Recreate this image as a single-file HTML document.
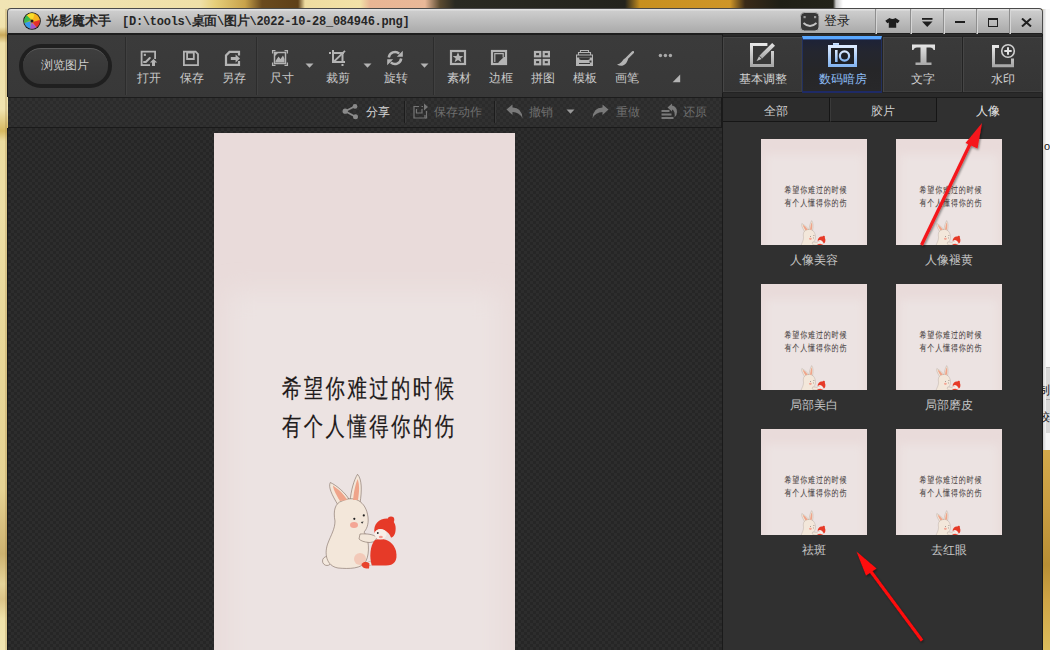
<!DOCTYPE html>
<html><head><meta charset="utf-8">
<style>
*{margin:0;padding:0;box-sizing:border-box}
html,body{width:1050px;height:650px;overflow:hidden;background:#eddfb2;font-family:"Liberation Sans",sans-serif}
div,span,svg{position:absolute}
.t{white-space:nowrap;line-height:1}
#title{left:7px;top:8px;width:1036px;height:27px;background:linear-gradient(#e2e2e2 0,#e2e2e2 1px,#cdcdcd 2px,#b9b9b9 60%,#a9a9a9 100%);border:1px solid #4a4a4a;border-bottom:2px solid #1e1e1e;border-radius:4px 4px 0 0}
#toolbar{left:7px;top:35px;width:716px;height:62px;background:linear-gradient(#3b3b3b,#383838);border-left:1px solid #1a1a1a}
#bar2{left:8px;top:97px;width:714px;height:31px;background:repeating-conic-gradient(#313131 0 25%,#2b2b2b 0 50%) 0 0/6px 6px;border-top:1px solid #1c1c1c;border-bottom:1px solid #1a1a1a;border-right:1px solid #1a1a1a}
#canvas{left:7px;top:128px;width:715px;height:522px;background:repeating-conic-gradient(#2d2d2d 0 25%,#262626 0 50%) 0 0/6px 6px;border-left:1px solid #1a1a1a}
#rpanel{left:722px;top:34px;width:321px;height:616px;background:#2b2b2b;border-left:1px solid #1a1a1a;border-right:1px solid #1a1a1a}
.lbl{color:#c9c9c9;font-size:12px}
.sep{width:1px;background:#2c2c2c;box-shadow:1px 0 0 #404040}
</style></head>
<body>
<!-- desktop strips -->
<div style="left:0;top:0;width:1050px;height:9px;background:linear-gradient(90deg,#f1e4b4 0,#efe0a8 200px,#e6cf7a 215px,#c8a24a 245px,#6a4a1e 262px,#5e3f18 298px,#efdca0 305px,#f2e2a8 360px,#e8b594 370px,#e9b898 425px,#5a4a30 440px,#2a2a22 455px,#23231d 625px,#c8901f 640px,#cf9628 730px,#3a2a18 745px,#1f1f16 780px,#23231a 833px,#c8c8c8 836px,#ffffff 843px)"></div>
<div style="left:0;top:9px;width:8px;height:641px;background:linear-gradient(180deg,#f2e6b4 0,#f0e2ac 18px,#c9a95a 26px,#efe0a8 34px,#f1e4b0 100px,#d6b860 122px,#ecdca0 132px,#eedfa6 200px,#e9d89a 320px,#e6d394 480px,#d8c080 515px,#cdb270 545px,#e6d49a 575px,#dcc488 590px,#f0e2aa 610px,#f2e6b2 641px)"></div>
<div style="left:5px;top:9px;width:2px;height:641px;background:rgba(150,120,60,0.25)"></div>
<div style="left:1043px;top:9px;width:7px;height:444px;background:#fafafa"></div>
<div style="left:1043px;top:367px;width:7px;height:66px;background:#d8d8d8;border-top:1px solid #bbb"></div>
<div style="left:1043px;top:399px;width:7px;height:1px;background:#aaa"></div>
<div style="left:1043px;top:419px;width:7px;height:1px;background:#aaa"></div>
<div style="left:1043px;top:433px;width:7px;height:20px;background:#f6f6f6"></div>
<div style="left:1043px;top:9px;width:7px;height:444px;overflow:hidden">
<div style="left:0;top:0;width:3px;height:444px;background:linear-gradient(90deg,#d0d0d0,#f4f4f4)"></div>
<div class="t" style="left:1px;top:132px;font-size:11px;color:#111">o</div>
<div class="t" style="left:-5px;top:375px;font-size:12px;color:#111">制</div>
<div class="t" style="left:-5px;top:402px;font-size:12px;color:#111">较</div>
</div>
<div style="left:1043px;top:450px;width:7px;height:200px;background:linear-gradient(180deg,#d2a84a 0,#c99c40 60px,#b88e34 115px,#cfa445 150px,#dcbc5c 200px)"></div>

<div id="title"></div>
<div id="toolbar"></div>
<div id="bar2"></div>
<div id="canvas"></div>
<div id="rpanel"></div>



<!-- bar2 content -->
<svg style="left:342px;top:104px" width="16" height="16" viewBox="0 0 16 16">
<path d="M3.2 7.2 L13 2.2 M3.2 7.2 L13.5 12.7" stroke="#8a8a8a" stroke-width="1.8"/>
<circle cx="3.2" cy="7.2" r="2.6" fill="#8a8a8a"/><circle cx="13" cy="2.4" r="2.4" fill="#8a8a8a"/><circle cx="13.5" cy="12.7" r="2.5" fill="#8a8a8a"/>
</svg>
<div class="t" style="left:365.5px;top:106px;font-size:12px;color:#d6d6d6">分享</div>
<div style="left:404px;top:101px;width:1px;height:22px;background:#1c1c1c;box-shadow:1px 0 0 #3a3a3a"></div>
<svg style="left:413px;top:103px" width="16" height="16" viewBox="0 0 16 16">
<path d="M6 3.5 H1 V15 H12 V12" stroke="#767676" stroke-width="1.2" fill="none"/>
<path d="M3.5 6 V10 H9 V6" stroke="#767676" stroke-width="1.2" fill="none"/>
<path d="M8.5 3.5 H10" stroke="#767676" stroke-width="1.2"/>
<path d="M11 0.5 L15 4 L11 7.5Z" fill="#767676"/>
<path d="M13.5 8 V15 H12" stroke="#767676" stroke-width="1.2" fill="none"/>
</svg>
<div class="t" style="left:433.5px;top:106px;font-size:12px;color:#6e6e6e">保存动作</div>
<div style="left:494px;top:101px;width:1px;height:22px;background:#1c1c1c;box-shadow:1px 0 0 #3a3a3a"></div>
<svg style="left:506px;top:104px" width="17" height="15" viewBox="0 0 17 15">
<path d="M0.5 5.5 L6.5 0.5 V3.5 Q16 3.5 16.5 14.5 Q13.5 8 6.5 8 V11Z" fill="#7a7a7a"/>
</svg>
<div class="t" style="left:528.5px;top:106px;font-size:12px;color:#6e6e6e">撤销</div>
<svg style="left:566px;top:109px" width="9" height="5" viewBox="0 0 9 5"><path d="M0.5 0.5 H8.5 L4.5 4.8Z" fill="#9a9a9a"/></svg>
<svg style="left:592px;top:104px" width="17" height="15" viewBox="0 0 17 15">
<path d="M16.5 5.5 L10.5 0.5 V3.5 Q1 3.5 0.5 14.5 Q3.5 8 10.5 8 V11Z" fill="#7a7a7a"/>
</svg>
<div class="t" style="left:615.5px;top:106px;font-size:12px;color:#6e6e6e">重做</div>
<svg style="left:661px;top:103px" width="17" height="16" viewBox="0 0 17 16">
<path d="M6.5 4.5 L11 0.5 V2.5 Q16 3.5 16 9 Q16 12.5 13.5 14.5 Q14.5 8 11 6.5 V8.5Z" fill="#7a7a7a"/>
<rect x="0.5" y="7" width="8" height="2" fill="#7a7a7a"/>
<rect x="0.5" y="10.5" width="10" height="2" fill="#7a7a7a"/>
<rect x="0.5" y="14" width="12" height="2" fill="#7a7a7a"/>
</svg>
<div class="t" style="left:682.5px;top:106px;font-size:12px;color:#6e6e6e">还原</div>

<!-- main image -->
<svg style="left:214px;top:133px" width="301" height="517" viewBox="0 0 301 517">
<defs>
<filter id="bl" x="-20%" y="-20%" width="140%" height="140%"><feGaussianBlur stdDeviation="12"/></filter>
<g id="pic">
<rect x="0" y="0" width="301" height="560" fill="#e9dbda"/>
<rect x="14" y="158" width="273" height="410" fill="#ece3e2" filter="url(#bl)"/>
<g transform="translate(68 0) scale(0.76 1)">
<text x="0" y="264" font-family="Liberation Sans, sans-serif" font-size="25.5" fill="currentColor" stroke="currentColor" stroke-width="0.2" letter-spacing="3.2" text-rendering="geometricPrecision">希望你难过的时候</text>
<text x="0" y="302" font-family="Liberation Sans, sans-serif" font-size="25.5" fill="currentColor" stroke="currentColor" stroke-width="0.2" letter-spacing="3.2" text-rendering="geometricPrecision">有个人懂得你的伤</text>
</g>
<g stroke="#7d6c62" stroke-width="0.6">
<path d="M124 372 C118 362 114 354 116.3 349.5 C122 352 132 360 136 368Z" fill="#f3e7da"/>
<path d="M136 369 C137 357 140 347 143.5 341.3 C148 346 148 358 146 370Z" fill="#f3e7da"/>
<circle cx="113" cy="428" r="4.5" fill="#f4e9de"/>
<path d="M128 368 C140 362 152 368 154 384 C155 392 152 397 150 399 C155 405 156 420 152 428 C148 436 135 436 124 435 C112 433 110 420 114 410 C117 402 121 396 121 388 C119 378 121 370 128 368Z" fill="#f3e7da"/>
<path d="M146 401 C154 400.5 159 401.5 162.5 404 C163 407 160 409.5 155 409.5 C150 409 147 408 145 406Z" fill="#f3e7da"/>
</g>
<path d="M126 368 C121 360 119 355 119 352.5 C124 356 130 361 133 367Z" fill="#efa48a"/>
<path d="M139 367 C140 357 142 350 143.5 346 C146 352 145 360 144 367Z" fill="#efa48a"/>
<ellipse cx="140" cy="392" rx="4" ry="3" fill="#f39a88" opacity="0.85"/>
<ellipse cx="146" cy="426" rx="6" ry="6" fill="#f2b6a2" opacity="0.6"/>
<circle cx="140.3" cy="385.8" r="1.1" fill="#222"/><circle cx="149.8" cy="382.4" r="1.1" fill="#222"/>
<path d="M146.8 389 L149.6 388.6 L148.2 390.8Z" fill="#333"/>
<path d="M156.5 428 L151.5 430.5 L152.5 433 L158 432Z" fill="#f6eee8" stroke="#8a7a70" stroke-width="0.4"/>
<path d="M147.5 431 C149.5 428 153.5 428.5 155.5 430.5 L155 435.5 C151 436 147.5 434.5 147.5 431Z" fill="#e8432c"/>
<path d="M161 407 C170 404 179 408 182 418 C184 428 180 432.5 172 432.5 L158 432.5 C155 425 156 412 161 407Z" fill="#e63a28"/>
<path d="M160.5 400 C159 391 165 385.5 173 385.5 C180 386 182.5 392 181.5 398 C181 402 179 404.5 177 404.5 C175 399 170 396 166 396 C163 396.5 161.5 398 160.5 400Z" fill="#e63a28"/>
<circle cx="177" cy="386.8" r="3.3" fill="#e63a28"/>
<ellipse cx="166.5" cy="401.2" rx="6" ry="5.3" fill="#f8efe9"/>
<circle cx="163.8" cy="400" r="0.9" fill="#222"/>
<ellipse cx="166.8" cy="404" rx="2" ry="1.3" fill="#f29a90"/>
</g>
</defs>
<use href="#pic" style="color:#1e1a1a"/>
</svg>
<!-- right tabs -->
<defs></defs>
<div style="left:723px;top:35px;width:319px;height:62px;background:#2a2a2a"></div>
<div style="left:722px;top:36px;width:81px;height:57px;background:linear-gradient(#3a3a3a,#353535);border:1px solid #232323;box-shadow:inset 1px 1px 0 #464646,inset -1px -1px 0 #3e3e3e"></div>
<div style="left:882px;top:36px;width:81px;height:57px;background:linear-gradient(#3a3a3a,#353535);border:1px solid #232323;box-shadow:inset 1px 1px 0 #464646,inset -1px -1px 0 #3e3e3e"></div>
<div style="left:962px;top:36px;width:81px;height:57px;background:linear-gradient(#3a3a3a,#353535);border:1px solid #232323;box-shadow:inset 1px 1px 0 #464646,inset -1px -1px 0 #3e3e3e"></div>
<div style="left:802px;top:36px;width:80px;height:57px;background:linear-gradient(#1d2238 0,#24262f 25%,#262628 60%,#28282a);border:1px solid #22305e;border-bottom:2px solid #1e2a66;border-top:3px solid #5aa8ff;box-shadow:inset 0 1px 0 #2a4a8a"></div>
<svg style="left:749px;top:42px" width="27" height="26" viewBox="0 0 27 26">
<defs><linearGradient id="gg" x1="0" y1="0" x2="0" y2="1"><stop offset="0" stop-color="#e6e6e6"/><stop offset="1" stop-color="#a8a8a8"/></linearGradient>
<linearGradient id="bg" x1="0" y1="0" x2="0" y2="1"><stop offset="0" stop-color="#dbeaff"/><stop offset="1" stop-color="#86b6f2"/></linearGradient></defs>
<path d="M18.4 2.5 H2.5 V23.5 H23.5 V9" stroke="url(#gg)" stroke-width="3" fill="none"/>
<path d="M23.2 0.9 L26 3.7 L13.2 16.5 L10.4 13.7Z" fill="url(#gg)"/>
<path d="M10 14.2 L12.7 16.9 L7.6 19Z" fill="#c0c0c0"/>
</svg>
<svg style="left:827px;top:42px" width="31" height="26" viewBox="0 0 31 26">
<rect x="6" y="1" width="6" height="3" fill="url(#bg)"/>
<rect x="2.5" y="4.5" width="26" height="19" stroke="url(#bg)" stroke-width="3" fill="#1e2026"/>
<rect x="8" y="8" width="2.6" height="12" fill="url(#bg)"/>
<circle cx="17.5" cy="14" r="4.6" stroke="url(#bg)" stroke-width="2.2" fill="none"/>
</svg>
<svg style="left:911px;top:44px" width="25" height="22" viewBox="0 0 25 22">
<path d="M1 0.5 H24 V6 H22.5 Q22 3.5 19 3.5 H15.5 V18.5 H20.5 V21 H4.5 V18.5 H9.5 V3.5 H6 Q3 3.5 2.5 6 H1Z" fill="url(#gg)"/>
</svg>
<svg style="left:991px;top:42px" width="26" height="27" viewBox="0 0 26 27">
<path d="M8 4.5 H2.5 V23.8 H21.5 V16.5" stroke="url(#gg)" stroke-width="3" fill="none"/>
<circle cx="17" cy="9" r="6.3" stroke="#d0d0d0" stroke-width="1.6" fill="#383838"/>
<path d="M17 5.3 V12.7 M13.3 9 H20.7" stroke="#e0e0e0" stroke-width="2"/>
</svg>
<div class="t" style="left:738.5px;top:73px;font-size:12px;color:#d2d2d2">基本调整</div>
<div class="t" style="left:819px;top:73px;font-size:12px;color:#8cbcf4">数码暗房</div>
<div class="t" style="left:910.5px;top:73px;font-size:12px;color:#d2d2d2">文字</div>
<div class="t" style="left:990.5px;top:73px;font-size:12px;color:#d2d2d2">水印</div>

<!-- subtabs -->
<div style="left:722px;top:97px;width:321px;height:553px;background:#303030;border-left:1px solid #1a1a1a;border-right:1px solid #181818;border-top:1px solid #1a1a1a"></div>
<div style="left:723px;top:98px;width:107px;height:24px;background:#2c2c2c;border-bottom:1px solid #161616;border-right:1px solid #151515"></div>
<div style="left:830px;top:98px;width:107px;height:24px;background:#2c2c2c;border-bottom:1px solid #161616;border-right:1px solid #151515;border-left:1px solid #3a3a3a"></div>
<div style="left:937px;top:98px;width:105px;height:24px;background:#303030"></div>
<div class="t" style="left:763.5px;top:105px;font-size:12px;color:#d0d0d0">全部</div>
<div class="t" style="left:870.5px;top:105px;font-size:12px;color:#d0d0d0">胶片</div>
<div class="t" style="left:976px;top:105px;font-size:12px;color:#e6e6e6">人像</div>
<!-- thumbs -->
<svg style="left:761px;top:139px" width="106" height="106" viewBox="3 115 294 294"><use href="#pic" style="color:#4a4444"/></svg>
<div class="t" style="left:790.0px;top:254px;font-size:12px;color:#c6c6c6">人像美容</div>
<svg style="left:896px;top:139px" width="106" height="106" viewBox="3 115 294 294"><use href="#pic" style="color:#4a4444"/></svg>
<div class="t" style="left:925.0px;top:254px;font-size:12px;color:#c6c6c6">人像褪黄</div>
<svg style="left:761px;top:284px" width="106" height="106" viewBox="3 115 294 294"><use href="#pic" style="color:#4a4444"/></svg>
<div class="t" style="left:790.0px;top:399px;font-size:12px;color:#c6c6c6">局部美白</div>
<svg style="left:896px;top:284px" width="106" height="106" viewBox="3 115 294 294"><use href="#pic" style="color:#4a4444"/></svg>
<div class="t" style="left:925.0px;top:399px;font-size:12px;color:#c6c6c6">局部磨皮</div>
<svg style="left:761px;top:429px" width="106" height="106" viewBox="3 115 294 294"><use href="#pic" style="color:#4a4444"/></svg>
<div class="t" style="left:802.0px;top:544px;font-size:12px;color:#c6c6c6">祛斑</div>
<svg style="left:896px;top:429px" width="106" height="106" viewBox="3 115 294 294"><use href="#pic" style="color:#4a4444"/></svg>
<div class="t" style="left:931.0px;top:544px;font-size:12px;color:#c6c6c6">去红眼</div>

<!-- arrows -->
<svg style="left:0;top:0" width="1050" height="650" viewBox="0 0 1050 650">
<defs><filter id="sh" x="-20%" y="-20%" width="140%" height="140%"><feDropShadow dx="1" dy="1.5" stdDeviation="1.2" flood-color="#000" flood-opacity="0.45"/></filter></defs>
<g filter="url(#sh)">
<path d="M921.5 245 L972 140" stroke="#f5141a" stroke-width="3.2"/>
<path d="M982 123 L965.5 143 L977.5 148.5Z" fill="#f5141a"/>
<path d="M922 640.5 L869 569" stroke="#ff0a0a" stroke-width="3"/>
<path d="M856.5 551.5 L866 575.5 L876.5 568.5Z" fill="#ff0a0a"/>
</g>
</svg>
<!-- title bar content -->
<svg style="left:23px;top:12px" width="18" height="18" viewBox="0 0 18 18">
<circle cx="9" cy="9" r="8.8" fill="#1a1a1a"/>
<g transform="translate(9 9)"><circle r="7.6" fill="#f6b21c"/><path d="M0.57 -1.49 L-5.28 -5.47 A7.6 7.6 0 0 1 2.72 -7.10Z" fill="#f8dc2a" stroke="#f8dc2a" stroke-width="0.5"/><path d="M1.59 -0.14 L2.72 -7.10 A7.6 7.6 0 0 1 7.57 -0.66Z" fill="#f6b21c" stroke="#f6b21c" stroke-width="0.5"/><path d="M0.92 1.31 L7.57 -0.66 A7.6 7.6 0 0 1 4.36 6.23Z" fill="#e52d2d" stroke="#e52d2d" stroke-width="0.5"/><path d="M-0.39 1.55 L4.36 6.23 A7.6 7.6 0 0 1 -1.84 7.37Z" fill="#a257cc" stroke="#a257cc" stroke-width="0.5"/><path d="M-1.55 0.39 L-1.84 7.37 A7.6 7.6 0 0 1 -7.37 1.84Z" fill="#3399ee" stroke="#3399ee" stroke-width="0.5"/><path d="M-1.11 -1.15 L-7.37 1.84 A7.6 7.6 0 0 1 -5.28 -5.47Z" fill="#36ba50" stroke="#36ba50" stroke-width="0.5"/><circle r="1.5" fill="#1a1a1a"/></g></svg>
<div class="t" style="left:46px;top:14px;font-size:13px;font-weight:bold;color:#262626;letter-spacing:0">光影魔术手</div>
<div class="t" style="left:122px;top:14px;font-size:12px;letter-spacing:-0.25px;font-family:'Liberation Mono',monospace;font-weight:bold;color:#262626">[D:\tools\<span style="position:static;font-family:'Liberation Sans',sans-serif;font-size:13px">桌面</span>\<span style="position:static;font-family:'Liberation Sans',sans-serif;font-size:13px">图片</span>\2022-10-28_084946.png]</div>
<svg style="left:800px;top:12px" width="20" height="20" viewBox="0 0 20 20">
<rect x="0.5" y="0.5" width="18.5" height="18.5" rx="4" fill="#383838" stroke="#b0b0b0" stroke-width="1"/>
<rect x="3.5" y="4" width="2.2" height="2.2" fill="#9a9a9a"/><rect x="14" y="4" width="2.2" height="2.2" fill="#9a9a9a"/>
<path d="M3.5 11 Q10 17 16.5 11" stroke="#c4c4c4" stroke-width="1.8" fill="none"/>
</svg>
<div class="t" style="left:824px;top:14px;font-size:13px;color:#1a1a1a">登录</div>
<div style="left:875px;top:9px;width:1px;height:25px;background:#8e8e8e;box-shadow:1px 0 0 #d6d6d6"></div>
<div style="left:910px;top:9px;width:1px;height:25px;background:#8e8e8e;box-shadow:1px 0 0 #d6d6d6"></div>
<div style="left:943px;top:9px;width:1px;height:25px;background:#8e8e8e;box-shadow:1px 0 0 #d6d6d6"></div>
<div style="left:976px;top:9px;width:1px;height:25px;background:#8e8e8e;box-shadow:1px 0 0 #d6d6d6"></div>
<div style="left:1009px;top:9px;width:1px;height:25px;background:#8e8e8e;box-shadow:1px 0 0 #d6d6d6"></div>
<svg style="left:885px;top:18px" width="15" height="10" viewBox="0 0 15 10"><path d="M4.5 0 L0.3 2.8 L2.3 5.3 L3.8 4.6 V9.7 H11.2 V4.6 L12.7 5.3 L14.7 2.8 L10.5 0 Q7.5 2.2 4.5 0Z" fill="#1e1e1e"/></svg>
<svg style="left:922px;top:18px" width="11" height="10" viewBox="0 0 11 10"><rect x="0" y="0" width="10.5" height="1.8" fill="#1e1e1e"/><path d="M0 3.4 H10.5 L5.25 9Z" fill="#1e1e1e"/></svg>
<div style="left:955px;top:21px;width:10px;height:2.4px;background:#1e1e1e"></div>
<div style="left:988px;top:18px;width:10px;height:9px;border:1.4px solid #1e1e1e;border-top-width:2.6px"></div>
<svg style="left:1021px;top:18px" width="11" height="9" viewBox="0 0 11 9"><path d="M1 0.5 L10 8.5 M10 0.5 L1 8.5" stroke="#1e1e1e" stroke-width="2"/></svg>

<!-- toolbar content -->
<div style="left:19px;top:44px;width:93px;height:44px;border-radius:22px;background:#1f1f1f"></div>
<div style="left:23px;top:48px;width:85px;height:36px;border-radius:18px;background:linear-gradient(#3e3e3e,#353535);border-top:1px solid #5c5c5c"></div>
<div class="t lbl" style="left:41px;top:59px;font-size:12px;color:#cfcfcf">浏览图片</div>
<div class="sep" style="left:125px;top:37px;height:58px"></div>
<div class="sep" style="left:256px;top:37px;height:58px"></div>
<div class="sep" style="left:433px;top:37px;height:58px"></div>

<svg style="left:140px;top:50px" width="18" height="18" viewBox="0 0 18 18">
<path d="M10 15.1 H1.6 V1.6 H15.1 V9" stroke="#b4b4b4" stroke-width="1.8" fill="none"/>
<rect x="3.8" y="3.8" width="2.1" height="2.1" fill="#b4b4b4"/>
<path d="M4 12 H5.8 L9.8 8" stroke="#b4b4b4" stroke-width="2" stroke-linecap="round" stroke-linejoin="round" fill="none"/>
<path d="M13.5 9 L17.2 12.6 H15 V16 H12 V12.6 H9.9Z" fill="#b4b4b4"/>
</svg>
<svg style="left:183px;top:50px" width="16" height="17" viewBox="0 0 16 17">
<path d="M0.9 1.6 H12.6 L15 4 V15.1 H0.9Z" stroke="#b4b4b4" stroke-width="1.8" fill="none"/>
<path d="M4.1 1.6 V9 H10.8 V1.6" stroke="#b4b4b4" stroke-width="1.8" fill="none"/>
<rect x="5" y="1" width="5" height="2.5" fill="#b4b4b4"/>
</svg>
<svg style="left:224px;top:50px" width="17" height="17" viewBox="0 0 17 17">
<path d="M15 5.5 V1.9 H5.5 L2 5.4 V14.9 H15 V11" stroke="#b4b4b4" stroke-width="2.2" fill="none"/>
<path d="M6.8 6.9 H11.6 V4.6 L16 8.5 L11.6 12.4 V10 H6.8Z" fill="#b4b4b4"/>
</svg>
<div class="t lbl" style="left:137px;top:72px">打开</div>
<div class="t lbl" style="left:179.5px;top:72px">保存</div>
<div class="t lbl" style="left:222px;top:72px">另存</div>

<svg style="left:271px;top:49px" width="18" height="18" viewBox="0 0 18 18">
<path d="M1.6 4.5 V1.6 H4.5 M13.5 1.6 H16.4 V4.5 M16.4 13.5 V16.4 H13.5 M4.5 16.4 H1.6 V13.5" stroke="#b4b4b4" stroke-width="1.3" fill="none"/>
<rect x="3.5" y="3.5" width="11" height="11" stroke="#b4b4b4" stroke-width="1.5" fill="none"/>
<path d="M4.5 13.5 L4.5 12 L7.5 7.5 L9.5 10 L12 6.5 L13.5 10 V13.5Z" fill="#b4b4b4"/>
<path d="M3.5 3.5 H7.5 L3.5 7.5Z" fill="#b4b4b4"/>
</svg>
<svg style="left:305px;top:63px" width="9" height="5" viewBox="0 0 9 5"><path d="M0.5 0.5 H8.5 L4.5 4.8Z" fill="#b4b4b4"/></svg>
<svg style="left:329px;top:50px" width="17" height="17" viewBox="0 0 17 17">
<rect x="0" y="2" width="2" height="2" fill="#b4b4b4"/>
<rect x="3" y="0" width="2" height="13" fill="#b4b4b4"/>
<rect x="3" y="2" width="12" height="2" fill="#b4b4b4"/>
<rect x="12.5" y="2" width="2" height="11" fill="#b4b4b4"/>
<rect x="3" y="11" width="13" height="2" fill="#b4b4b4"/>
<rect x="12.5" y="14" width="2" height="2" fill="#b4b4b4"/>
<path d="M4.5 12 L16 0.8" stroke="#b4b4b4" stroke-width="1.8"/>
</svg>
<svg style="left:363px;top:63px" width="9" height="5" viewBox="0 0 9 5"><path d="M0.5 0.5 H8.5 L4.5 4.8Z" fill="#b4b4b4"/></svg>
<svg style="left:387px;top:50px" width="16" height="16" viewBox="0 0 16 16">
<path d="M1.8 7.5 A6.3 6.3 0 0 1 12.2 3.6" stroke="#b4b4b4" stroke-width="2.5" fill="none"/>
<path d="M9.8 6.8 L15.8 0.8 L15.8 6.8Z" fill="#b4b4b4"/>
<path d="M14.2 8.5 A6.3 6.3 0 0 1 3.8 12.4" stroke="#b4b4b4" stroke-width="2.5" fill="none"/>
<path d="M6.2 9.2 L0.2 15.2 L0.2 9.2Z" fill="#b4b4b4"/>
</svg>
<svg style="left:420px;top:63px" width="9" height="5" viewBox="0 0 9 5"><path d="M0.5 0.5 H8.5 L4.5 4.8Z" fill="#b4b4b4"/></svg>
<div class="t lbl" style="left:269.5px;top:72px">尺寸</div>
<div class="t lbl" style="left:326px;top:72px">裁剪</div>
<div class="t lbl" style="left:383.5px;top:72px">旋转</div>

<svg style="left:449px;top:49px" width="18" height="17" viewBox="0 0 18 17">
<rect x="2" y="2" width="14" height="13" stroke="#b4b4b4" stroke-width="2.2" fill="none"/>
<path d="M9 3.2 L10.5 7 L14.3 7 L11.3 9.5 L12.4 13.3 L9 11 L5.6 13.3 L6.7 9.5 L3.7 7 L7.5 7Z" fill="#b4b4b4"/>
</svg>
<svg style="left:490px;top:49px" width="18" height="17" viewBox="0 0 18 17">
<rect x="2" y="2" width="14" height="13" stroke="#b4b4b4" stroke-width="2.2" fill="none"/>
<path d="M4.8 13 V4.6 H13.2 V8.5" stroke="#b4b4b4" stroke-width="1.2" fill="none"/>
<path d="M8.5 13.2 L13.8 8 L15 8 V14 H8.5Z" fill="#b4b4b4"/>
</svg>
<svg style="left:533px;top:50px" width="18" height="16" viewBox="0 0 18 16">
<rect x="2" y="2" width="5.2" height="4.3" stroke="#b4b4b4" stroke-width="2.2" fill="none"/>
<rect x="10.7" y="2" width="5.2" height="4.3" stroke="#b4b4b4" stroke-width="2.2" fill="none"/>
<rect x="2" y="10" width="5.2" height="4.3" stroke="#b4b4b4" stroke-width="2.2" fill="none"/>
<rect x="10.7" y="10" width="5.2" height="4.3" stroke="#b4b4b4" stroke-width="2.2" fill="none"/>
</svg>
<svg style="left:576px;top:50px" width="17" height="16" viewBox="0 0 17 16">
<path d="M4.5 2.5 V0.5 H12.5 V2.5 M2.5 5 V2.5 H14.5 V5 M0.5 8 V5 H16.5 V8" stroke="#b4b4b4" stroke-width="1.1" fill="none"/>
<path d="M0 7.5 H17 V16 H0Z" fill="#b4b4b4"/>
<path d="M3 7.5 H14 Q14 10 12 10 H5 Q3 10 3 7.5Z" fill="#383838"/>
<rect x="3" y="13" width="11" height="1" fill="#383838"/>
<rect x="13.5" y="10.5" width="2" height="2" fill="#383838"/>
</svg>
<svg style="left:617px;top:50px" width="17" height="17" viewBox="0 0 17 17">
<path d="M16 2.2 L10 8.2" stroke="#b4b4b4" stroke-width="2.4" stroke-linecap="round"/>
<path d="M9.2 7.5 L11 9.3 Q9.8 14 6 15.5 Q3 16.5 0 14.5 Q2.5 14 4.5 12 Q6.5 8.5 9.2 7.5Z" fill="#b4b4b4"/>
</svg>
<svg style="left:658px;top:53px" width="16" height="5" viewBox="0 0 16 5">
<circle cx="2.4" cy="2.5" r="1.7" fill="#a8a8a8"/><circle cx="7.4" cy="2.5" r="1.7" fill="#a8a8a8"/><circle cx="12.4" cy="2.5" r="1.7" fill="#a8a8a8"/>
</svg>
<svg style="left:672px;top:74px" width="9" height="9" viewBox="0 0 9 9"><path d="M8.2 0.6 V8.2 H0.6Z" fill="#b4b4b4"/></svg>
<div class="t lbl" style="left:446.5px;top:72px">素材</div>
<div class="t lbl" style="left:488.5px;top:72px">边框</div>
<div class="t lbl" style="left:531px;top:72px">拼图</div>
<div class="t lbl" style="left:572.5px;top:72px">模板</div>
<div class="t lbl" style="left:614.5px;top:72px">画笔</div>
</body></html>
